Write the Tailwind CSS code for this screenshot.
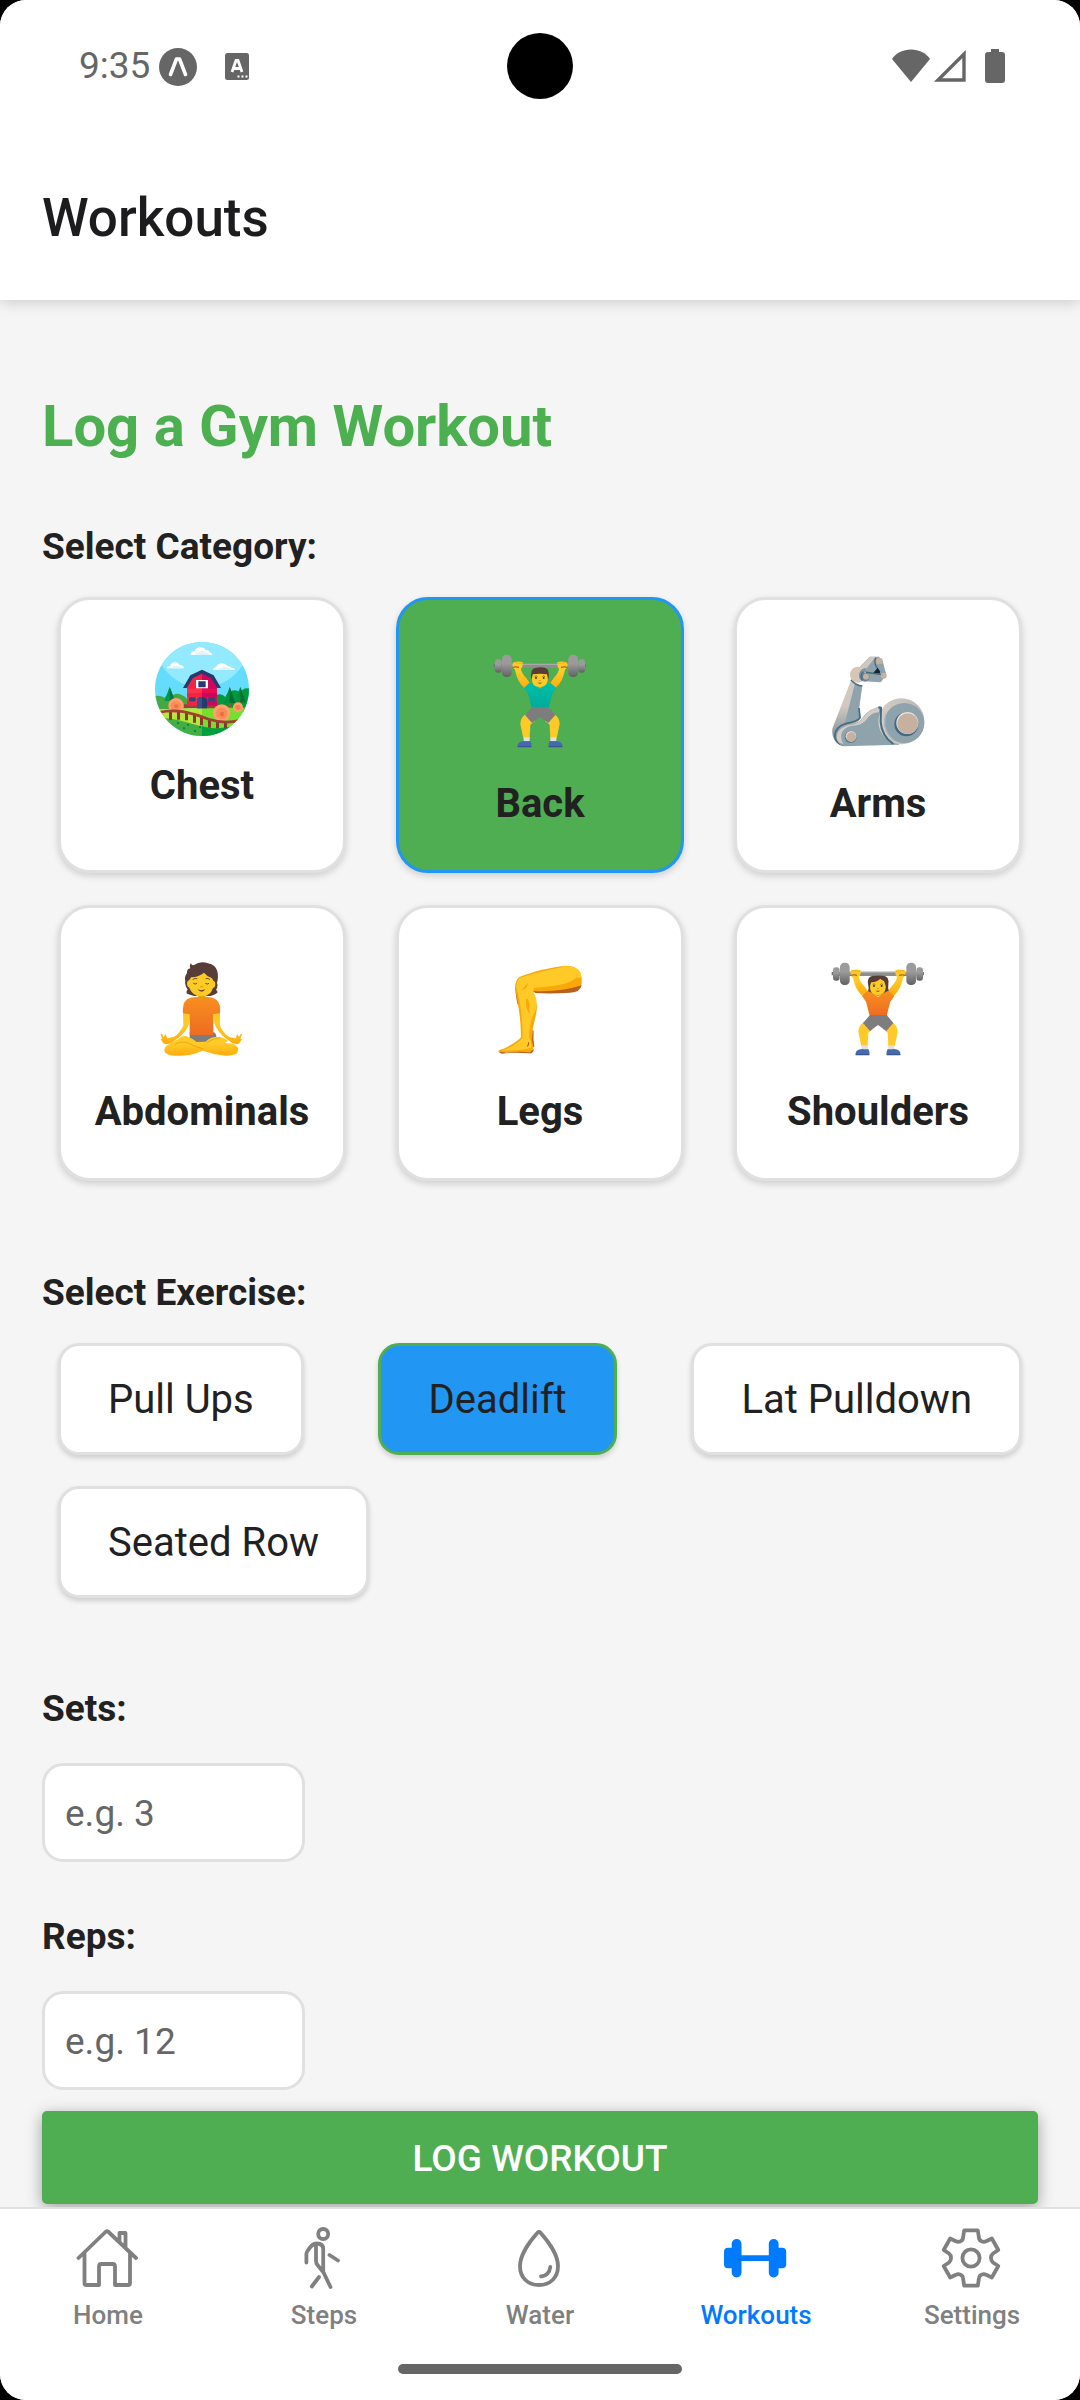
<!DOCTYPE html>
<html lang="en">
<head>
<meta charset="utf-8">
<meta name="viewport" content="width=device-width, initial-scale=1">
<title>Workouts</title>
<script src="https://cdn.jsdelivr.net/npm/@tailwindcss/browser@4"></script>
</head>
<body class="bg-black font-[Roboto,sans-serif] text-[#212121]">
<div class="flex min-h-screen flex-col overflow-hidden rounded-[26px] bg-[#f5f5f5]">

  <!-- Status bar and app header -->
  <header class="relative z-10 bg-white shadow-[0_2px_14px_rgba(0,0,0,0.18)]">
    <div class="relative flex h-[132px] items-center justify-between pl-[79px] pr-[75px] text-[#666]">
      <div class="flex items-center">
        <span class="text-[37px] leading-[44px]">9:35</span>
        <svg class="ml-2 size-10" viewBox="0 0 40 40" aria-hidden="true"><circle cx="20" cy="21" r="19" fill="#666"/><path d="M12.500 28.500 L18.500 13 H21.500 L27.500 28.500" fill="none" stroke="#fff" stroke-width="3.600" stroke-linecap="round" stroke-linejoin="round"/></svg>
        <svg class="ml-[27px] h-7 w-6" viewBox="0 0 24 28" aria-hidden="true"><rect y="1" width="24" height="27" rx="2.500" fill="#666"/><path d="M7 20 L11 8.500 H13 L17 20 M8.500 16.500 H15.500" fill="none" stroke="#fff" stroke-width="2.800"/><path d="M12.500 24.500h2M16.500 24.500h2M20.500 24.500h2" stroke="#fff" stroke-width="2"/></svg>
      </div>
      <span class="absolute left-1/2 top-[33px] size-[66px] -translate-x-1/2 rounded-full bg-black"></span>
      <div class="flex items-center">
        <svg class="h-[34px] w-10" viewBox="0 0 40 34" aria-hidden="true"><path d="M20 33 L1 10 C5 4 12 .5 20 .5 S35 4 39 10 Z" fill="#666"/></svg>
        <svg class="ml-0.5 h-[34px] w-[34px]" viewBox="0 0 34 34" aria-hidden="true"><path d="M31 5 V31 H5 Z" fill="none" stroke="#666" stroke-width="3.400"/></svg>
        <svg class="ml-[18px] h-[34px] w-5" viewBox="0 0 20 34" aria-hidden="true"><path d="M6 0h8v3h3a3 3 0 0 1 3 3v25a3 3 0 0 1-3 3H3a3 3 0 0 1-3-3V6a3 3 0 0 1 3-3h3z" fill="#666"/></svg>
      </div>
    </div>
    <h1 class="px-[42px] pb-[51px] pt-[55px] text-[53px] font-medium leading-[62px] text-[#1c1c1e]">Workouts</h1>
  </header>

  <main class="flex-1 px-[42px] pb-[3px] pt-[92px]">
    <h2 class="text-[58px] font-bold leading-[68px] text-[#4cb050]">Log a Gym Workout</h2>

    <h3 class="mt-[65px] text-[37px] font-bold leading-[44px]">Select Category:</h3>
    <div class="mx-4 mt-7 grid grid-cols-3 gap-x-[50px] gap-y-8 text-[40px] font-bold leading-[46px]">

      <button type="button" class="flex flex-col items-center gap-[26px] rounded-[32px] border-3 border-[#e0e0e0] bg-white pb-[43px] pt-[41px] shadow-[0_3px_7px_rgba(0,0,0,0.16)]">
        <svg class="size-24" viewBox="342 182 288 288" aria-hidden="true">
          <defs><clipPath id="disc"><circle cx="486" cy="326" r="141"/></clipPath></defs>
          <g clip-path="url(#disc)">
            <rect x="342" y="182" width="288" height="288" fill="#64dcfc"/>
            <circle cx="486" cy="180" r="142" fill="#93eafe"/>
            <path d="M452 224q0-11 12-12q4-11 18-11q11 0 15 8q10 0 11 7q9 1 8 8z" fill="#fff"/><path d="M466 224q0-8 10-8q6-8 15-2q7-2 9 4q9 0 9 6z" fill="#def5fc"/>
            <path d="M381 264q1-8 10-8q3-10 14-10q10 0 13 7q12 0 14 11z" fill="#fff"/><path d="M394 264q2-7 9-6q8-6 14 1q8 0 9 5z" fill="#def5fc"/>
            <path d="M519 269q0-8 10-9q4-11 17-11q11 0 15 8q10-1 13 5q10 0 11 7z" fill="#fff"/><path d="M534 269q2-8 11-7q8-8 16 0q8-1 12 7z" fill="#def5fc"/>
            <path d="M340 348q20-5 34 4q8-14 26-8q10-8 25 0q12 4 18 14v35H340z" fill="#44a942"/>
            <path d="M528 345q16-8 28 5q8-20 28-20q12 0 16 8q12-20 30-12v70H528z" fill="#00993c"/>
            <path d="M389 320l-16 42h32z" fill="#00994a"/><path d="M389 320v42h16z" fill="#007a3c"/>
            <path d="M569 320l-17 48h34zM601 320l-17 46h33z" fill="#00913c"/><path d="M569 320v48h17zM601 320v46h16z" fill="#006f32"/>
            <path d="M566 368h6v18h-6zM598 366h6v18h-6z" fill="#b34a2b"/>
            <path d="M340 386h146v50H340z" fill="#b5e63a"/><path d="M486 382h144v65H486z" fill="#74df2c"/>
            <path d="M432 372h108v12H432z" fill="#9c403a"/>
            <path d="M441 376V306l18-22 27-12v104z" fill="#f12543"/><path d="M486 272l27 12 18 22v70h-45z" fill="#d0065a"/>
            <path d="M441 325h45v13h-45zM441 350h45v12h-45z" fill="#ff3347"/><path d="M486 325h45v13h-45zM486 350h45v12h-45z" fill="#e90d4f"/>
            <path d="M429 323l22-38 35-17 35 17 22 38h-11l-19-30-27-13-27 13-19 30z" fill="#253b70"/>
            <path d="M468 299h36v25h-36z" fill="#fff"/><path d="M475 303h22v18h-22z" fill="#253b70"/>
            <path d="M447 351h20v12h-20zM505 351h21v12h-21z" fill="#334477"/>
            <path d="M432 384h54v32l-100-8-46-12v-7z" fill="#b5e63a"/>
            <path d="M471 384v-27q3-7 15-7t15 7v27z" fill="#253b70"/><path d="M471 384v-27q3-7 15-7v34z" fill="#37518a"/>
            <circle cx="408" cy="376" r="23" fill="#ffa06d"/><circle cx="407" cy="377" r="15" fill="#ff8b58"/><circle cx="409" cy="378" r="6" fill="#ed7045"/>
            <circle cx="594" cy="381" r="15" fill="#ffa06d"/><circle cx="594" cy="381" r="8" fill="#f8804e"/>
            <path d="M340 412q60 0 100 14q45 14 75 17q30 3 70-5v35H340z" fill="#42ae43"/>
            <path d="M486 438q20 8 50 6t60-10v40H486z" fill="#00a13c"/>
            <path d="M387 392h9v26h-9zM411 390h9v28h-9zM435 396h9v24h-9zM459 402h9v25h-9zM480 408h9v27h-9zM504 416h9v26h-9zM528 420h9v24h-9zM552 422h9v22h-9z" fill="#853a31"/>
            <circle cx="545" cy="398" r="26" fill="#ffa06d"/><circle cx="545" cy="399" r="17" fill="#ff8b58"/><circle cx="546" cy="401" r="7" fill="#ed7045"/>
            <path d="M358 396q35-8 72-2q40 8 76 23q45 14 92 4" fill="none" stroke="#9f4132" stroke-width="8"/>
            <path d="M411 425h6v6h-6zM441 430h6v6h-6zM429 441h6v6h-6zM462 449h6v6h-6zM477 437h6v6h-6zM500 448h6v6h-6zM525 453h6v6h-6z" fill="#008e43"/>
          </g>
        </svg>
        <span>Chest</span>
      </button>

      <button type="button" aria-pressed="true" class="flex flex-col items-center gap-8 rounded-[32px] border-3 border-[#2196f3] bg-[#4fae51] pb-[43px] pt-[53px] shadow-[0_3px_7px_rgba(0,0,0,0.16)]">
        <svg class="size-24" viewBox="334 220 288 288" aria-hidden="true">
          <defs>
            <linearGradient id="plate" x1="0" y1="0" x2="0" y2="1"><stop offset="0.4" stop-color="#9b9b9b"/><stop offset="1" stop-color="#616161"/></linearGradient>
            <linearGradient id="teal" x1="0" y1="0" x2="0" y2="1"><stop offset="0" stop-color="#00c0a8"/><stop offset="1" stop-color="#00ab9b"/></linearGradient>
            <linearGradient id="orange" x1="0" y1="0" x2="0" y2="1"><stop offset="0" stop-color="#f88f1f"/><stop offset="1" stop-color="#ee6c22"/></linearGradient>
            <linearGradient id="skin" x1="0" y1="0" x2="0" y2="1"><stop offset="0.4" stop-color="#ffca28"/><stop offset="1" stop-color="#ffac0c"/></linearGradient>
            <g id="barbell">
              <path d="M339 253h12v10h-12zM604 253h12v10h-12zM361 252h6v13h-6zM588 252h6v13h-6z" fill="#757575"/>
              <path d="M390 252h175v13H390z" fill="#8e8e8e"/><path d="M390 252h175v4H390z" fill="#a9a9a9"/>
              <rect x="343" y="239" width="20" height="40" rx="9" fill="url(#plate)"/><rect x="593" y="239" width="20" height="40" rx="9" fill="url(#plate)"/>
              <rect x="364" y="225" width="29" height="67" rx="13" fill="url(#plate)"/><rect x="563" y="225" width="29" height="67" rx="13" fill="url(#plate)"/>
            </g>
            <g id="arms">
              <path d="M397 264q-4-13 4-17q15-4 25 1q2 12-5 20q2 14 15 26l13 18-18 13q-22-20-28-55z" fill="url(#skin)"/>
              <path d="M559 264q4-13-4-17q-15-4-25 1q-2 12 5 20q-2 14-15 26l-13 18 18 13q22-20 28-55z" fill="url(#skin)"/>
              <path d="M396 263q10-3 19 0M560 263q-10-3-19 0" fill="none" stroke="#8e4d1c" stroke-width="3"/>
              <path d="M398 248q14 3 26 3M558 248q-14 3-26 3" fill="none" stroke="#f3a414" stroke-width="2"/>
            </g>
            <g id="lower">
              <path d="M434 404q-16 14-15 29l9 43h19l2-41 15-12zM522 404q16 14 15 29l-9 43h-19l-2-41-15-12z" fill="#ffca28"/>
              <path d="M454 382h50l20 24-21 24-25-18-24 18-21-24z" fill="#7d7d7d"/>
              <path d="M429 473h18v12h-18zM509 473h18v12h-18z" fill="#e0e0e0"/>
              <path d="M411 502q-3-16 20-18q8 2 18 0q5 8 3 18zM545 502q3-16-20-18q-8 2-18 0q-5 8-3 18z" fill="#4568ae"/><path d="M411 499h41v4h-41zM504 499h41v4h-41z" fill="#35549a"/>
            </g>
            <g id="face">
              <path d="M455 289q-2-22 22-22t24 22q3 33-24 33t-22-33z" fill="#fccb25"/>
              <path d="M462 291q4-5 8 0M485 291q4-5 8 0" fill="none" stroke="#6b3e2e" stroke-width="2"/>
              <circle cx="466" cy="295" r="2.800" fill="#3b2b29"/><circle cx="489" cy="295" r="2.800" fill="#3b2b29"/>
              <path d="M475 301h5v3h-5z" fill="#e69a12"/><path d="M470 308q8 3 15 0q-7 9-15 0z" fill="#87483a"/>
            </g>
          </defs>
          <use href="#barbell"/><use href="#arms"/>
          <path d="M470 315h16v15h-16z" fill="#eea00b"/>
          <path d="M446 309l25 9q7 12 14 0l24-9 18 16-12 17-11 42h-51l-11-42-12-17z" fill="url(#teal)"/>
          <path d="M471 318q7 17 14 0" fill="#f3a00c"/>
          <use href="#lower"/><use href="#face"/>
          <path d="M452 300q-5-34 13-36q28-4 35 5q7 8 3 31l-4-16q-20-4-43 0z" fill="#573c38"/>
        </svg>
        <span>Back</span>
      </button>

      <button type="button" class="flex flex-col items-center gap-8 rounded-[32px] border-3 border-[#e0e0e0] bg-white pb-[43px] pt-[53px] shadow-[0_3px_7px_rgba(0,0,0,0.16)]">
        <svg class="size-24" viewBox="327 220 288 288" aria-hidden="true">
          <defs>
            <linearGradient id="rim" x1="0" y1="0" x2="1" y2="0"><stop offset="0" stop-color="#d6ccc5"/><stop offset="1" stop-color="#b9b9b9"/></linearGradient>
            <linearGradient id="upper" x1="0" y1="0" x2="0" y2="1"><stop offset="0.4" stop-color="#d2c8c1"/><stop offset="1" stop-color="#6f8791"/></linearGradient>
          </defs>
          <path d="M390 302q15 17 34 18l-9 65 4 30q-8 18-42 23q-24 10-23 32l14 26q-38-8-34-49z" fill="url(#upper)"/>
          <path d="M402 311l21 10-9 64 4 29q-8 12-48 22z" fill="#8fa3ac"/>
          <path d="M390 300q14 17 34 19M414 385l3 29q-6 11-40 17q-34 8-36 38q3 24 26 28" fill="none" stroke="#446c82" stroke-width="5"/>
          <path d="M411 267l35-36h27l11 10 12 45-16 21-36-4z" fill="#8fa3ac"/>
          <path d="M411 268l36-37h17l-33 42z" fill="#d1c7c1"/><path d="M464 234q-7 17 6 33" fill="none" stroke="#426a80" stroke-width="4"/>
          <path d="M470 264l8 12-5 13-17-8z" fill="#15252b"/><path d="M430 278l56 5-9 25-47-3z" fill="#8fa3ac"/><path d="M430 277l52 8" stroke="#3e687f" stroke-width="4"/>
          <circle cx="411" cy="285" r="24" fill="#d7c6b7"/><path d="M434 264q-22 5-20 28q3 13 18 14l8-3q-18-12-6-31z" fill="#7895a4"/><path d="M427 276q-12 10-3 26" fill="none" stroke="#426a80" stroke-width="4"/>
          <circle cx="434" cy="292" r="11" fill="#557a8e"/><circle cx="435" cy="291" r="9" fill="#c6b1a0"/><circle cx="475" cy="244" r="10" fill="#c6b1a0"/><circle cx="488" cy="288" r="9" fill="#c6b1a0"/>
          <path d="M347 470q1-29 38-35q29-2 43-25q19-24 52-30l55 115-166 5q-20-2-22-30z" fill="#8fa3ac"/>
          <path d="M347 474q0-29 38-38q29-2 43-25q19-24 46-30v17q-24 0-39 24q-16 17-45 17q-25 6-29 26q-2 17 7 28q-20-3-21-19z" fill="#d4cac4"/>
          <circle cx="541" cy="425" r="69" fill="url(#rim)"/><circle cx="550" cy="430" r="60" fill="#8fa3ac"/>
          <path d="M472 383l8 2-1 42q3 42 38 66" fill="none" stroke="#426a80" stroke-width="6"/>
          <path d="M494 405q-12 50 26 78" fill="none" stroke="#a9b8be" stroke-width="4"/>
          <circle cx="556" cy="434" r="36" fill="#426a80"/><circle cx="559" cy="430" r="33" fill="#ede5de"/><circle cx="560" cy="432" r="31" fill="#c6b1a0"/>
          <circle cx="389" cy="472" r="18" fill="#557a8e"/><circle cx="390" cy="470" r="16" fill="#e4d8ce"/><circle cx="391" cy="472" r="14" fill="#c6b1a0"/>
        </svg>
        <span>Arms</span>
      </button>

      <button type="button" class="flex flex-col items-center gap-8 rounded-[32px] border-3 border-[#e0e0e0] bg-white pb-[43px] pt-[53px] shadow-[0_3px_7px_rgba(0,0,0,0.16)]">
        <svg class="size-24" viewBox="342 214 288 288" aria-hidden="true">
          <path d="M441 312q-4-8 2-12q-10-13-7-26q-4-12 5-24q-1-12 10-14q-4-8 2-16q0 8 9 6q20-14 42-5q23 4 28 24q4 18-1 34q4 12-3 21q6 5 4 9q-12 10-30 10h-40z" fill="#573c38"/>
          <path d="M475 312h21v24h-21z" fill="#e59d08"/>
          <path d="M441 281q0-8 6-9q3-3 6-9q25-2 39-14q8 10 24 17l4 7q6 1 6 9q0 12-7 13q-8 25-34 26q-29-2-37-27q-7-2-7-13z" fill="#fccb25"/>
          <path d="M458 270q7-6 14-3M497 267q7-3 13 3" fill="none" stroke="#573c38" stroke-width="2.500"/>
          <path d="M460 281q6 4 11 0M496 281q6 4 11 0" fill="none" stroke="#4a342f" stroke-width="2.500"/>
          <path d="M481 289h8v4h-8z" fill="#e59d08"/><path d="M472 299q12 5 24 0q-10 14-24 0z" fill="#70403a"/>
          <path d="M429 368l21 2q0 28-7 43q-14 25-41 41q-20 15-32 7l-8-12 4-2-4-13q1-4 5 0l4 8 5-9 5 10q-1 5 6 2q16-2 24-10q17-18 19-28zM540 368l-20 2q0 28 8 43q13 23 40 41q18 15 30 7l8-12-5-2 5-13q-1-4-5 0l-4 8-5-9-4 10q0 5-7 2q-15-2-23-10q-15-16-18-28z" fill="url(#skin)"/>
          <path d="M449 428h73q8 5 7 17l-30 20h-50z" fill="#7d7d7d"/>
          <path d="M429 371q-4-40 22-47l23-3q10 10 22 0l22 3q26 8 22 47l-20 2v63h-71v-62z" fill="url(#orange)"/><path d="M475 320h21q-3 12-10 12q-9 0-11-12z" fill="#e59d08"/>
          <path d="M524 442q28-2 40 12l-20 12-48-8q8-12 28-16zM373 480q2-12 20-20q20-10 34-20q20-2 42 17l30 20q-28 18-76 21q-50 2-50-18z" fill="url(#skin)"/>
          <path d="M427 440q20-2 42 17q70-2 110 6q20 7 15 22q-4 13-34 13q-40-1-91-23z" fill="url(#skin)"/>
          <path d="M405 464q15-10 34-6q28 14 51 20M500 459q20-14 40-15" fill="none" stroke="#f19b0c" stroke-width="2.500"/>
        </svg>
        <span>Abdominals</span>
      </button>

      <button type="button" class="flex flex-col items-center gap-8 rounded-[32px] border-3 border-[#e0e0e0] bg-white pb-[43px] pt-[53px] shadow-[0_3px_7px_rgba(0,0,0,0.16)]">
        <svg class="size-24" viewBox="334 214 288 288" aria-hidden="true">
          <path d="M403 300q-1-36 22-42q62-22 125-30q50-2 53 38q3 32-20 38q-50 8-124 4l-3 10q17 18 11 52l-11 48q-1 30 3 48q1 22-20 22-40-2-79 3l-7-5q0-6 14-8 42-20 54-35-1-70-12-111z" fill="#faa807"/>
          <path d="M458 304q80 4 145-17q-5 22-34 22q-60 4-105 1zM405 303l7 38-1 5-5-28zM355 488q8-2 22 1q40-5 70-1l13-10q-2 15-17 13-40-4-79 1z" fill="#b8611e"/>
          <path d="M456 420l-3 30 5 23 3-2q-4-24-2-47z" fill="#bd6d20"/>
          <path d="M407 292q1-28 20-31q60-18 116-28l4-4q55-2 55 35-14-2-24 6-22 18-116 24-10 8 2 24 8 20 0 46-17 26-19 79 12 20 6 32-26 8-86 8 50-20 61-41-1-80-14-130z" fill="#ffca28"/>
          <path d="M436 328q8-3 10 15l1 30q-13-16-11-45zM441 280q-1 18-18 22z" fill="#faa807"/>
          <path d="M439 470q5-2 5-12" fill="none" stroke="#b8611e" stroke-width="3.500"/>
        </svg>
        <span>Legs</span>
      </button>

      <button type="button" class="flex flex-col items-center gap-8 rounded-[32px] border-3 border-[#e0e0e0] bg-white pb-[43px] pt-[53px] shadow-[0_3px_7px_rgba(0,0,0,0.16)]">
        <svg class="size-24" viewBox="334 220 288 288" aria-hidden="true">
          <use href="#barbell"/><use href="#arms"/>
          <path d="M448 312q4-10 0-24q-3-22 16-24h30q18 2 15 24q-2 14 2 24l-12 9h-40z" fill="#573c38"/>
          <path d="M446 309l21 10q11 16 22 0l20-10 18 16-12 17-11 42h-51l-11-42-12-17z" fill="url(#orange)"/>
          <path d="M467 318q11 15 22 0" fill="#e99c0c"/>
          <use href="#lower"/><use href="#face"/>
          <path d="M453 293q-6-27 15-28q30-4 35 8q4 8-1 23l-6-16q-8-3-11-7q-8 9-27 11z" fill="#573c38"/>
        </svg>
        <span>Shoulders</span>
      </button>
    </div>

    <h3 class="mt-[90px] text-[37px] font-bold leading-[44px]">Select Exercise:</h3>
    <div class="mx-4 mt-7 flex flex-wrap justify-between gap-x-8 gap-y-[31px] text-[40px] leading-[46px]">
      <button type="button" class="rounded-[21px] border-3 border-[#e0e0e0] bg-white px-[47px] pb-[29px] pt-[31px] shadow-[0_3px_5px_rgba(0,0,0,0.16)]">Pull Ups</button>
      <button type="button" aria-pressed="true" class="rounded-[21px] border-3 border-[#4fae51] bg-[#2196f3] px-[47px] pb-[29px] pt-[31px] shadow-[0_3px_5px_rgba(0,0,0,0.16)]">Deadlift</button>
      <button type="button" class="rounded-[21px] border-3 border-[#e0e0e0] bg-white px-[47px] pb-[29px] pt-[31px] shadow-[0_3px_5px_rgba(0,0,0,0.16)]">Lat Pulldown</button>
      <button type="button" class="rounded-[21px] border-3 border-[#e0e0e0] bg-white px-[47px] pb-[29px] pt-[31px] shadow-[0_3px_5px_rgba(0,0,0,0.16)]">Seated Row</button>
    </div>

    <form class="mt-[89px] flex flex-col items-start text-[37px] leading-[44px]">
      <label for="sets" class="font-bold">Sets:</label>
      <input id="sets" type="text" inputmode="numeric" placeholder="e.g. 3" class="mt-8 h-[99px] w-[263px] rounded-[21px] border-3 border-[#e0e0e0] bg-white px-5 pt-0.5 placeholder:text-[#666]">
      <label for="reps" class="mt-[53px] font-bold">Reps:</label>
      <input id="reps" type="text" inputmode="numeric" placeholder="e.g. 12" class="mt-8 h-[99px] w-[263px] rounded-[21px] border-3 border-[#e0e0e0] bg-white px-5 pt-0.5 placeholder:text-[#666]">
      <button type="submit" class="mt-[21px] h-[93px] w-full rounded-[5px] bg-[#4fae51] pt-0.5 font-medium text-white shadow-[0_4px_16px_rgba(0,0,0,0.35)]">LOG WORKOUT</button>
    </form>
  </main>

  <!-- Tab bar -->
  <nav class="relative z-10 border-t-2 border-[#e0e0e0] bg-white pb-[26px] pt-[17px]" aria-label="Main">
    <div class="grid grid-cols-5 text-center text-[26px] font-medium leading-[30px] text-[#808080]">
      <a href="#home" class="flex flex-col items-center gap-2.5">
        <svg class="size-16" viewBox="0 0 64 64" fill="none" stroke="currentColor" stroke-width="3.800" stroke-linecap="round" stroke-linejoin="round" aria-hidden="true"><path d="M2.500 32 L30 5.500 Q31 4.800 32 5.500 L60 32 M8.500 27 V57 Q8.500 59 10.500 59 H23 V40.500 Q23 38 25.500 38 H36.500 Q39 38 39 40.500 V59 H52 Q54 59 54 57 V27 M43.500 16 V7 H49.500 V21.500"/></svg>
        Home
      </a>
      <a href="#steps" class="flex flex-col items-center gap-2.5">
        <svg class="size-16" viewBox="0 0 64 64" fill="none" stroke="currentColor" stroke-width="3.800" stroke-linecap="round" stroke-linejoin="round" aria-hidden="true"><circle cx="31.200" cy="8" r="5"/><path d="M14.400 36.500 V28 Q14.400 26.500 15.500 25 Q20 17.500 24.500 17.500 Q31.200 17.500 31.200 23 V45.700 L38.500 61 M24 18.500 V35 Q24 37 25.500 39 L31.200 46 M27 51 L19.800 60.500 M37.500 29 L46 34.500"/></svg>
        Steps
      </a>
      <a href="#water" class="flex flex-col items-center gap-2.5">
        <svg class="size-16" viewBox="0 0 64 64" fill="none" stroke="currentColor" stroke-width="3.800" stroke-linecap="round" stroke-linejoin="round" aria-hidden="true"><path d="M29.500 6.700 Q31 5 32.500 6.700 C40 15 50 29 50 40 C50 52 42 59 31 59 S12 52 12 40 C12 29 22 15 29.500 6.700 Z"/><path d="M42.300 41 Q41 50 33 50.500"/></svg>
        Water
      </a>
      <a href="#workouts" aria-current="page" class="flex flex-col items-center gap-2.5 text-[#007aff]">
        <svg class="size-16" viewBox="0 0 64 64" fill="currentColor" aria-hidden="true"><rect x="7.700" y="13" width="9.800" height="38.500" rx="4.800"/><rect x="44.800" y="13" width="9.800" height="38.500" rx="4.800"/><rect x="0" y="21.700" width="12" height="20.600" rx="4"/><rect x="50.200" y="21.700" width="12" height="20.600" rx="4"/><path d="M14 29.300h34v5.600H14z"/></svg>
        Workouts
      </a>
      <a href="#settings" class="flex flex-col items-center gap-2.5">
        <svg class="size-16" viewBox="0 0 64 64" fill="none" stroke="currentColor" stroke-width="3.800" stroke-linejoin="round" aria-hidden="true"><circle cx="31" cy="32" r="8.600"/><path d="M24.200 4.300 H37.800 L39 12 Q39.300 14.500 41.500 15.300 Q44 16.500 46.200 15.200 L51.800 12.500 L58.300 24 L53 27.500 Q51 29 51 32 Q51 35 53 36.500 L58.300 40 L51.800 51.500 L46.200 48.800 Q44 47.500 41.500 48.700 Q39.300 49.500 39 52 L37.800 59.700 H24.200 L23 52 Q22.700 49.500 20.500 48.700 Q18 47.500 15.800 48.800 L10.200 51.500 L3.700 40 L9 36.500 Q11 35 11 32 Q11 29 9 27.500 L3.700 24 L10.200 12.500 L15.800 15.200 Q18 16.500 20.500 15.300 Q22.700 14.500 23 12 Z"/></svg>
        Settings
      </a>
    </div>
    <div class="mx-auto mt-[34px] h-2.5 w-[284px] rounded-full bg-[#666]"></div>
  </nav>
</div>
</body>
</html>
